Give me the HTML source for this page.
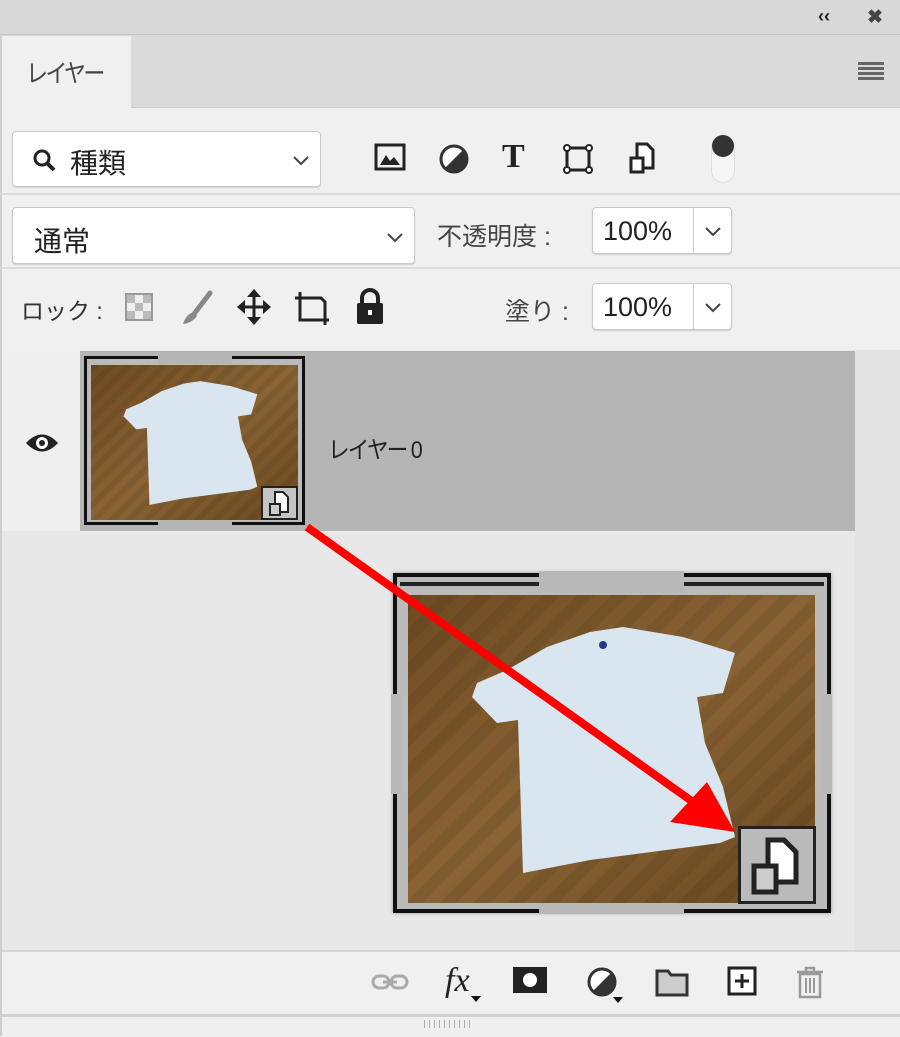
<!DOCTYPE html>
<html><head><meta charset="utf-8"><style>
*{margin:0;padding:0;box-sizing:border-box}
body{width:900px;height:1037px;overflow:hidden;background:#f0f0f0;font-family:"Liberation Sans","Noto Sans CJK JP",sans-serif;color:#222;position:relative}
.abs{position:absolute}
.box{position:absolute;background:#fff;border:1px solid #c9c9c9;border-radius:4px;box-shadow:0 1px 1px #d0d0d0}
.txt{position:absolute;font-size:26px;color:#222;white-space:nowrap}
svg{position:absolute;overflow:visible}
</style></head><body>
<div class="abs" style="left:0;top:0;width:900px;height:35px;background:#d8d8d8;border-bottom:1px solid #c4c4c4"></div>
<div class="txt" style="left:818px;top:6px;font-size:18px;font-weight:bold">‹‹</div>
<div class="txt" style="left:867px;top:6px;font-size:19px;font-weight:bold;color:#444">✖</div>
<div class="abs" style="left:0;top:35px;width:900px;height:73px;background:#dadada;border-bottom:1px solid #cdcdcd"></div>
<div class="abs" style="left:2px;top:36px;width:129px;height:73px;background:#f0f0f0"></div>
<div class="txt" style="left:26px;top:54px;font-size:25px;color:#444;letter-spacing:-3px;transform:scaleX(0.88);transform-origin:left">レイヤー</div>
<div class="abs" style="left:858px;top:62px;width:26px;height:3px;background:#666;box-shadow:0 5px 0 #666,0 10px 0 #666,0 15px 0 #666"></div>
<div class="abs" style="left:0;top:36px;width:2px;height:1000px;background:#cfcfcf"></div>

<div class="box" style="left:12px;top:131px;width:309px;height:56px"></div>
<svg style="left:32px;top:148px" width="26" height="26"><circle cx="10" cy="10" r="7" fill="none" stroke="#222" stroke-width="3"/><line x1="15" y1="15" x2="22" y2="22" stroke="#222" stroke-width="4"/></svg>
<div class="txt" style="left:70px;top:142px;font-size:28px">種類</div>
<svg style="left:292px;top:155px" width="18" height="12"><path d="M2 2 L9 9 L16 2" fill="none" stroke="#444" stroke-width="2"/></svg>
<svg style="left:374px;top:143px" width="32" height="30"><rect x="2" y="2" width="28" height="24" fill="none" stroke="#222" stroke-width="3"/><path d="M6 22 L12 12 L16 18 L20 14 L26 22Z" fill="#222"/></svg>
<svg style="left:438px;top:143px" width="32" height="32"><circle cx="16" cy="16" r="13" fill="#fff" stroke="#333" stroke-width="3"/><path d="M26 6 A13 13 0 0 1 6 26Z" fill="#333"/></svg>
<div class="txt" style="left:502px;top:138px;font-family:'Liberation Serif',serif;font-weight:bold;font-size:34px">T</div>
<svg style="left:562px;top:143px" width="32" height="32"><rect x="5" y="5" width="22" height="22" fill="none" stroke="#222" stroke-width="3"/><g fill="#fff" stroke="#222" stroke-width="2"><circle cx="5" cy="5" r="3"/><circle cx="27" cy="5" r="3"/><circle cx="5" cy="27" r="3"/><circle cx="27" cy="27" r="3"/></g></svg>
<svg style="left:627px;top:142px" width="32" height="34"><path d="M10 2 H20 L26 8 V26 H10Z" fill="#fff" stroke="#222" stroke-width="3"/><rect x="4" y="16" width="12" height="14" fill="#fff" stroke="#222" stroke-width="3"/></svg>
<div class="abs" style="left:711px;top:135px;width:24px;height:48px;border:1px solid #ddd;border-radius:12px;background:#f6f6f6"></div>
<div class="abs" style="left:712px;top:135px;width:22px;height:22px;border-radius:50%;background:#333"></div>
<div class="abs" style="left:0;top:193px;width:900px;height:2px;background:#dcdcdc"></div>

<div class="box" style="left:12px;top:207px;width:403px;height:57px"></div>
<div class="txt" style="left:34px;top:220px;font-size:28px">通常</div>
<svg style="left:386px;top:232px" width="18" height="12"><path d="M2 2 L9 9 L16 2" fill="none" stroke="#444" stroke-width="2"/></svg>
<div class="txt" style="left:437px;top:217px;font-size:25px;color:#444">不透明度 :</div>
<div class="box" style="left:592px;top:207px;width:140px;height:47px"></div>
<div class="abs" style="left:693px;top:208px;width:1px;height:45px;background:#ccc"></div>
<div class="txt" style="left:603px;top:216px;font-size:27px">100%</div>
<svg style="left:704px;top:226px" width="18" height="12"><path d="M2 2 L9 9 L16 2" fill="none" stroke="#444" stroke-width="2"/></svg>
<div class="abs" style="left:0;top:267px;width:900px;height:2px;background:#dcdcdc"></div>

<div class="txt" style="left:21px;top:292px;font-size:23px;color:#333">ロック :</div>
<svg style="left:124px;top:292px" width="30" height="30"><rect x="2" y="2" width="26" height="26" fill="#eee" stroke="#999" stroke-width="2"/><g fill="#bbb"><rect x="3" y="3" width="8" height="8"/><rect x="19" y="3" width="8" height="8"/><rect x="11" y="11" width="8" height="8"/><rect x="3" y="19" width="8" height="8"/><rect x="19" y="19" width="8" height="8"/></g></svg>
<svg style="left:180px;top:290px" width="36" height="36"><path d="M30 3 L14 24" stroke="#888" stroke-width="5" stroke-linecap="round"/><path d="M14 22 Q6 24 3 34 Q12 33 17 26Z" fill="#888"/></svg>
<svg style="left:236px;top:288px" width="36" height="38"><path d="M18 3 V35 M3 19 H33" stroke="#222" stroke-width="3"/><path d="M18 1 L11 9 H25Z M18 37 L11 29 H25Z M1 19 L9 12 V26Z M35 19 L27 12 V26Z" fill="#222"/></svg>
<svg style="left:293px;top:290px" width="38" height="38"><path d="M7 2 V30 H36 M2 8 H28 L32 12 V35" fill="none" stroke="#222" stroke-width="3"/></svg>
<svg style="left:355px;top:288px" width="30" height="38"><path d="M7 16 V10 A8 8 0 0 1 23 10 V16" fill="none" stroke="#222" stroke-width="4"/><rect x="2" y="15" width="26" height="21" rx="2" fill="#222"/><rect x="13" y="22" width="4" height="5" fill="#fff"/></svg>
<div class="txt" style="left:505px;top:292px;font-size:25px;color:#444">塗り :</div>
<div class="box" style="left:592px;top:283px;width:140px;height:47px"></div>
<div class="abs" style="left:693px;top:284px;width:1px;height:45px;background:#ccc"></div>
<div class="txt" style="left:603px;top:292px;font-size:27px">100%</div>
<svg style="left:704px;top:302px" width="18" height="12"><path d="M2 2 L9 9 L16 2" fill="none" stroke="#444" stroke-width="2"/></svg>

<div class="abs" style="left:2px;top:350px;width:898px;height:600px;background:#e8e8e8"></div>
<div class="abs" style="left:2px;top:350px;width:78px;height:181px;background:#efefef"></div>
<div class="abs" style="left:855px;top:350px;width:45px;height:600px;background:#e3e3e3"></div>
<div class="abs" style="left:80px;top:351px;width:775px;height:180px;background:#b5b5b5"></div>
<svg style="left:24px;top:430px" width="36" height="26"><path d="M2 13 Q18 -4 34 13 Q18 30 2 13Z" fill="#222"/><circle cx="18" cy="13" r="6" fill="#fff"/><circle cx="18" cy="13" r="3" fill="#222"/></svg>
<div class="txt" style="left:328px;top:430px;font-size:24px;color:#222;letter-spacing:-2px;transform:scaleX(0.9);transform-origin:left">レイヤー 0</div>

<div class="abs" style="left:84px;top:356px;width:221px;height:169px;border:3px solid #111;background:#bbb"></div>
<div class="abs" style="left:158px;top:354px;width:74px;height:10px;background:#b5b5b5"></div>
<div class="abs" style="left:158px;top:518px;width:74px;height:10px;background:#b5b5b5"></div>
<svg style="left:91px;top:365px" width="207" height="155" viewBox="0 0 407 308" preserveAspectRatio="none">
<defs><linearGradient id="w" x1="0" y1="0" x2="1" y2="1"><stop offset="0" stop-color="#6e4a22"/><stop offset="0.5" stop-color="#8a6434"/><stop offset="1" stop-color="#6a4820"/></linearGradient>
<pattern id="p" width="24" height="24" patternUnits="userSpaceOnUse" patternTransform="rotate(45)"><rect width="12" height="24" fill="#000" opacity="0.07"/></pattern></defs>
<rect width="407" height="308" fill="url(#w)"/><rect width="407" height="308" fill="url(#p)"/>
<polygon points="182,37 215,32 275,42 327,58 315,98 289,102 297,148 315,192 327,242 312,248 182,265 115,278 110,125 89,128 64,102 69,88 99,75 139,52" fill="#d9e6ef"/></svg>
<div class="abs" style="left:261px;top:486px;width:37px;height:34px;background:#c4c4c4;border:2px solid #222"></div>
<svg style="left:266px;top:490px" width="26" height="28"><path d="M9 2 H17 L22 7 V22 H9Z" fill="#fff" stroke="#222" stroke-width="2"/><rect x="4" y="14" width="10" height="11" fill="#ccc" stroke="#222" stroke-width="2"/></svg>

<div class="abs" style="left:393px;top:573px;width:438px;height:340px;border:4px solid #111;background:#bbb;box-shadow:0 0 4px #999"></div>
<div class="abs" style="left:400px;top:582px;width:424px;height:4px;background:#222"></div>
<div class="abs" style="left:539px;top:571px;width:145px;height:22px;background:#b8b8b8"></div>
<div class="abs" style="left:539px;top:902px;width:145px;height:12px;background:#b8b8b8"></div>
<div class="abs" style="left:391px;top:694px;width:10px;height:100px;background:#b8b8b8"></div>
<div class="abs" style="left:822px;top:694px;width:10px;height:100px;background:#b8b8b8"></div>
<svg style="left:408px;top:595px" width="407" height="308" viewBox="0 0 407 308">
<rect width="407" height="308" fill="url(#w)"/><rect width="407" height="308" fill="url(#p)"/>
<polygon points="182,37 215,32 275,42 327,58 315,98 289,102 297,148 315,192 327,242 312,248 182,265 115,278 110,125 89,128 64,102 69,88 99,75 139,52" fill="#d9e6ef"/>
<circle cx="195" cy="50" r="4" fill="#223a88"/></svg>
<div class="abs" style="left:738px;top:826px;width:78px;height:78px;background:#bbb;border:3px solid #222"></div>
<svg style="left:748px;top:836px" width="60" height="62"><path d="M20 4 H36 L48 16 V46 H20Z" fill="#fff" stroke="#222" stroke-width="5"/><rect x="6" y="30" width="22" height="26" fill="#ccc" stroke="#222" stroke-width="5"/></svg>

<svg style="left:0;top:0" width="900" height="1037"><line x1="307" y1="527" x2="700" y2="807" stroke="#f00" stroke-width="8"/><polygon points="735,832 670,822 707,782" fill="#f00"/></svg>

<div class="abs" style="left:2px;top:950px;width:898px;height:2px;background:#d6d6d6"></div>
<div class="abs" style="left:2px;top:952px;width:898px;height:62px;background:#f0f0f0"></div>
<div class="abs" style="left:2px;top:1014px;width:898px;height:3px;background:#d0d0d0"></div>
<div class="abs" style="left:2px;top:1017px;width:898px;height:20px;background:#efefef"></div>
<div class="abs" style="left:424px;top:1020px;width:50px;height:8px;background:repeating-linear-gradient(90deg,#aaa 0 1px,transparent 1px 5px)"></div>
<svg style="left:371px;top:972px" width="38" height="20"><rect x="2" y="4" width="16" height="12" rx="6" fill="none" stroke="#aaa" stroke-width="3"/><rect x="20" y="4" width="16" height="12" rx="6" fill="none" stroke="#aaa" stroke-width="3"/><line x1="12" y1="10" x2="26" y2="10" stroke="#aaa" stroke-width="3"/></svg>
<div class="txt" style="left:445px;top:962px;font-family:'Liberation Serif',serif;font-style:italic;font-size:34px">fx</div>
<svg style="left:471px;top:996px" width="10" height="8"><path d="M0 0 H10 L5 6Z" fill="#111"/></svg>
<svg style="left:512px;top:966px" width="36" height="28"><rect x="1" y="1" width="34" height="26" fill="#222"/><circle cx="18" cy="14" r="7" fill="#fff"/></svg>
<svg style="left:587px;top:967px" width="32" height="30"><circle cx="15" cy="15" r="13" fill="#fff" stroke="#333" stroke-width="3"/><path d="M25 5 A13 13 0 0 1 5 25Z" fill="#333"/></svg>
<svg style="left:613px;top:997px" width="10" height="8"><path d="M0 0 H10 L5 6Z" fill="#111"/></svg>
<svg style="left:655px;top:967px" width="34" height="30"><path d="M2 4 H13 L16 8 H32 V28 H2Z" fill="#ccc" stroke="#333" stroke-width="3"/></svg>
<svg style="left:727px;top:966px" width="30" height="30"><rect x="2" y="2" width="26" height="26" fill="#fff" stroke="#222" stroke-width="3"/><path d="M15 8 V22 M8 15 H22" stroke="#222" stroke-width="3"/></svg>
<svg style="left:795px;top:966px" width="30" height="34"><path d="M2 6 H28 M11 6 V2 H19 V6" fill="none" stroke="#999" stroke-width="2.5"/><path d="M5 8 H25 V31 H5Z" fill="none" stroke="#999" stroke-width="2.5"/><path d="M11 12 V27 M15 12 V27 M19 12 V27" stroke="#999" stroke-width="2"/></svg>
</body></html>
